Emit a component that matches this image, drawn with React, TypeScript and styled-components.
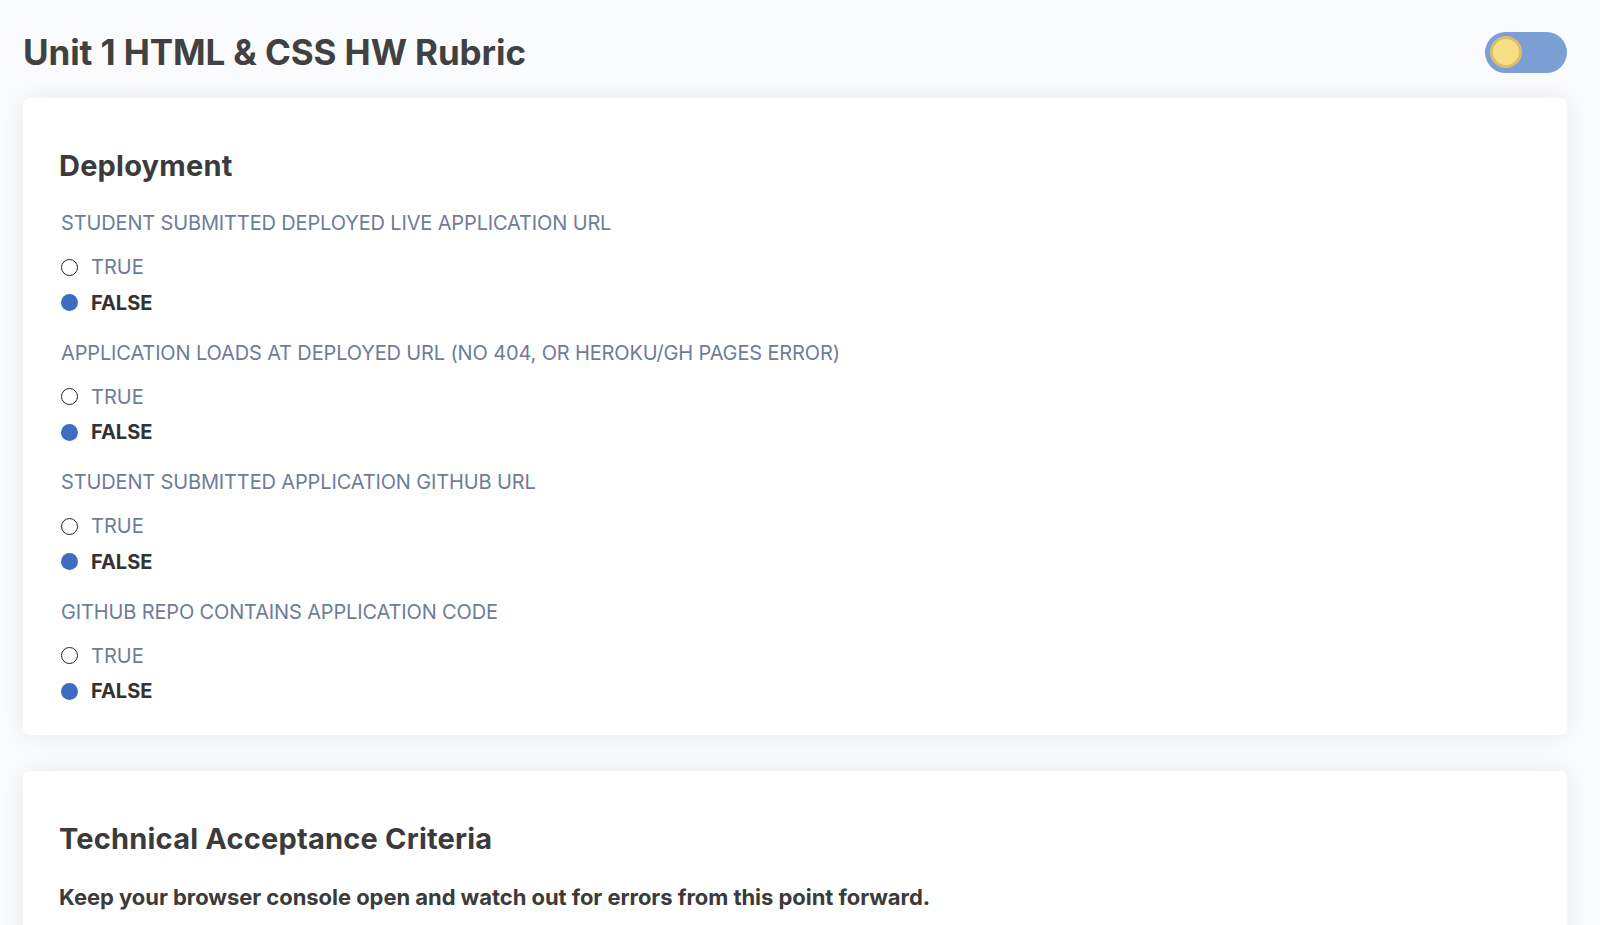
import React from "react";
import styled, { createGlobalStyle } from "styled-components";

const GlobalStyle = createGlobalStyle`
  html, body {
    margin: 0;
    padding: 0;
    background: #fafbfc;
    font-family: Inter, "Noto Sans", "Liberation Sans", sans-serif;
    -webkit-font-smoothing: antialiased;
  }
  * { box-sizing: border-box; }
`;

const Page = styled.div`
  padding: 31px 33px 40px 23px;
  display: flex;
  flex-direction: column;
  gap: 25px;
`;

const Header = styled.header`
  display: flex;
  align-items: center;
  justify-content: space-between;
`;

const Title = styled.h1`
  margin: 0;
  font-size: 35px;
  line-height: normal;
  font-weight: 700;
  color: #414141;
  letter-spacing: -0.1px;
`;

const Toggle = styled.button<{ $on: boolean }>`
  width: 82px;
  height: 41px;
  border: none;
  border-radius: 21px;
  background: #7ca0d6;
  padding: 0 5px;
  display: flex;
  align-items: center;
  justify-content: ${(p) => (p.$on ? "flex-end" : "flex-start")};
  cursor: pointer;
`;

const Knob = styled.span`
  width: 32px;
  height: 32px;
  border-radius: 50%;
  background: #f8df86;
  border: 3px solid #dcbf6b;
`;

const Cards = styled.div`
  display: flex;
  flex-direction: column;
  gap: 36px;
`;

const Card = styled.section<{ $minHeight?: number }>`
  background: #ffffff;
  border-radius: 6px;
  box-shadow: 0 0 26px rgba(20, 30, 50, 0.075);
  padding: 50px 36px 32px 36px;
  min-height: ${(p) => (p.$minHeight ? `${p.$minHeight}px` : "auto")};
`;

const CardTitle = styled.h2`
  margin: 0 0 28px 0;
  font-size: 29px;
  line-height: normal;
  font-weight: 700;
  color: #3b3b3b;
  letter-spacing: 0.2px;
`;

const Note = styled.p`
  margin: 28px 0 0 0;
  font-size: 22px;
  line-height: normal;
  font-weight: 700;
  color: #3b3b3b;
  letter-spacing: -0.05px;
`;

const Groups = styled.div`
  display: flex;
  flex-direction: column;
  gap: 26px;
  padding-left: 2px;
`;

const Group = styled.fieldset`
  border: none;
  margin: 0;
  padding: 0;
  display: flex;
  flex-direction: column;
`;

const Question = styled.legend`
  padding: 0;
  margin: 0 0 20px 0;
  font-size: 20px;
  line-height: normal;
  font-weight: 400;
  color: #6f7c98;
  text-transform: uppercase;
  letter-spacing: -0.14px;
`;

const Options = styled.div`
  display: flex;
  flex-direction: column;
  gap: 11.5px;
`;

const Option = styled.label<{ $checked: boolean }>`
  display: flex;
  align-items: center;
  gap: 13px;
  font-size: 20px;
  line-height: normal;
  font-weight: ${(p) => (p.$checked ? 700 : 400)};
  color: ${(p) => (p.$checked ? "#333333" : "#6f7c98")};
  text-transform: uppercase;
  cursor: pointer;
`;

const Dot = styled.span<{ $checked: boolean }>`
  width: 17px;
  height: 17px;
  border-radius: 50%;
  flex: none;
  background: ${(p) => (p.$checked ? "#3d6cc0" : "#ffffff")};
  border: ${(p) => (p.$checked ? "none" : "1.3px solid #222")};
`;

const questions = [
  "Student submitted deployed live application URL",
  "Application loads at deployed URL (no 404, or Heroku/GH pages error)",
  "Student submitted application GitHub URL",
  "GitHub repo contains application code",
];

export default function App() {
  const [dark, setDark] = React.useState(false);
  return (
    <>
      <GlobalStyle />
      <Page>
        <Header>
          <Title>Unit 1 HTML &amp; CSS HW Rubric</Title>
          <Toggle $on={dark} onClick={() => setDark(!dark)} aria-label="Toggle theme">
            <Knob />
          </Toggle>
        </Header>
        <Cards>
          <Card>
            <CardTitle>Deployment</CardTitle>
            <Groups>
              {questions.map((q) => (
                <Group key={q}>
                  <Question>{q}</Question>
                  <Options>
                    <Option $checked={false}>
                      <Dot $checked={false} />
                      True
                    </Option>
                    <Option $checked={true}>
                      <Dot $checked={true} />
                      False
                    </Option>
                  </Options>
                </Group>
              ))}
            </Groups>
          </Card>
          <Card $minHeight={300}>
            <CardTitle>Technical Acceptance Criteria</CardTitle>
            <Note>Keep your browser console open and watch out for errors from this point forward.</Note>
          </Card>
        </Cards>
      </Page>
    </>
  );
}
